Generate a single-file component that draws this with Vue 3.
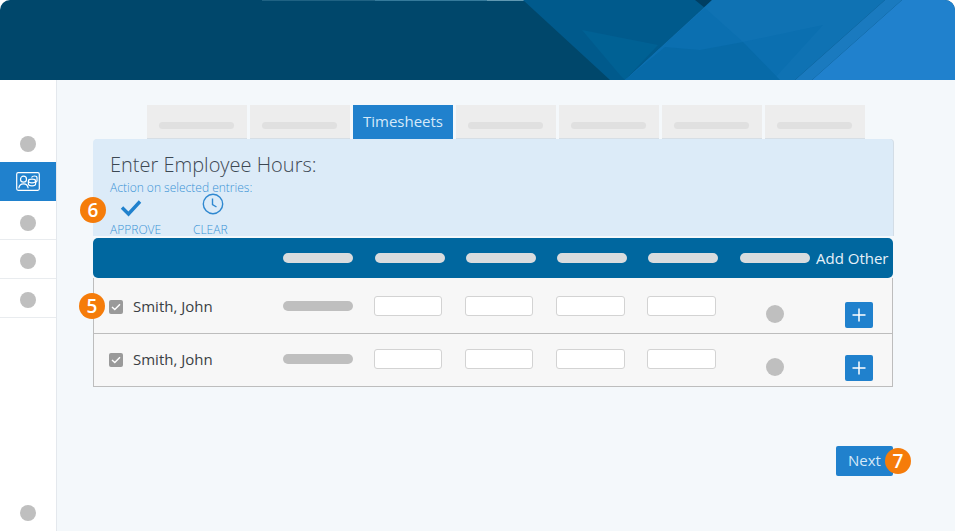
<script setup>
const tabs = [
  { id: 1 }, { id: 2 }, { id: 3, label: 'Timesheets' }, { id: 4 }, { id: 5 }, { id: 6 }, { id: 7 }
]
const headerBars = [92, 91, 91, 91, 92, 76]
const employees = [
  { id: 1, badge: '5' },
  { id: 2, badge: '' }
]
</script>

<template>
  <div class="page">
    <header class="banner">
      <svg class="banner-art" width="955" height="80" viewBox="0 0 955 80" aria-hidden="true">
        <rect x="262" y="0" width="113" height="1" fill="#1f6283" />
        <rect x="375" y="0" width="112" height="1" fill="#357a9b" />
        <rect x="487" y="0" width="70" height="1" fill="#6099b2" />
        <rect x="557" y="0" width="73" height="1" fill="#3a7f9f" />
        <polygon points="523,0 712,0 625,80 610,80" fill="#005a8c" />
        <polygon points="582,30 658,45 625,80 620,75" fill="#006194" />
        <polygon points="695,0 712,0 705,8" fill="#003f63" />
        <polygon points="712,0 885,0 795,80 625,80" fill="#0f72b3" />
        <polygon points="705,8 743,42 823,25 773,80 625,80" fill="#0b6fb0" />
        <polygon points="665,47 700,50 743,42 780,80 625,80" fill="#076aa8" />
        <polygon points="885,0 902,0 812,80 795,80" fill="#1a7abf" />
        <polygon points="902,0 955,0 955,80 812,80" fill="#2081cd" />
      </svg>
    </header>

    <div class="body">
      <aside class="sidebar">
        <div class="side-item plain"><span class="side-dot"></span></div>
        <div class="side-item active">
          <svg width="24" height="19" viewBox="0 0 24 19" fill="none" stroke="#fff" stroke-width="1.2">
            <rect x="0.7" y="0.7" width="22.6" height="17.6" rx="1.5" />
            <circle cx="7.5" cy="7.2" r="3" />
            <path d="M2.8 16.2c.3-3 2.2-4.4 4.7-4.4s4.400 1.400 4.700 4.400" />
            <ellipse cx="16" cy="9" rx="3.600" ry="1.800" />
            <path d="M12.400 9v3c0 1 1.600 1.800 3.600 1.800s3.600-.8 3.600-1.800V9" />
            <path d="M15.500 5.500c.5-1 1.800-1.500 3-1.500s2.500.6 2.500 1.700v3c0 .8-.6 1.300-1.400 1.600" />
          </svg>
        </div>
        <div class="side-item first-after"><span class="side-dot"></span></div>
        <div class="side-item"><span class="side-dot"></span></div>
        <div class="side-item"><span class="side-dot"></span></div>
        <div class="side-foot"><span class="side-dot"></span></div>
      </aside>

      <main class="main">
        <nav class="tabs">
          <div v-for="t in tabs" :key="t.id" class="tab" :class="{ current: t.label }">
            <template v-if="t.label">{{ t.label }}</template>
            <span v-else class="tab-bar"></span>
          </div>
        </nav>

        <section class="panel">
          <h1 class="panel-title">Enter Employee Hours:</h1>
          <p class="panel-sub">Action on selected entries:</p>
          <div class="actions">
            <span class="badge badge-six">6</span>
            <div class="action approve">
              <svg width="22" height="18" viewBox="0 0 22 18" fill="none" stroke="#2081cd" stroke-width="3.400">
                <path d="M2 8.500 8.500 15 20 2.500" />
              </svg>
              <span>APPROVE</span>
            </div>
            <div class="action clear">
              <svg width="22" height="22" viewBox="0 0 22 22" fill="none" stroke="#2f88d0" stroke-width="1.400">
                <circle cx="11" cy="11" r="9.700" />
                <path d="M10.500 5.500V11.500L14.500 14" />
              </svg>
              <span>CLEAR</span>
            </div>
          </div>
        </section>

        <section class="table">
          <div class="table-head">
            <span v-for="(w, i) in headerBars" :key="i" class="head-cell" :style="{ width: w + 'px' }">
              <span class="head-bar"></span>
            </span>
            <span class="head-label">Add Other</span>
          </div>
          <div v-for="e in employees" :key="e.id" class="row">
            <div class="name-cell">
              <span v-if="e.badge" class="badge badge-five">{{ e.badge }}</span>
              <span class="check">
                <svg width="10" height="8" viewBox="0 0 10 8" fill="none" stroke="#fff" stroke-width="1.400">
                  <path d="M1 4 3.800 6.600 9 1.200" />
                </svg>
              </span>
              <span class="name">Smith, John</span>
            </div>
            <span class="row-bar"></span>
            <span class="field"></span>
            <span class="field"></span>
            <span class="field wide"></span>
            <span class="field wide"></span>
            <span class="row-dot"></span>
            <button class="add" type="button">
              <svg width="16" height="16" viewBox="0 0 16 16" stroke="#fff" stroke-width="1.500">
                <path d="M8 1.500v13M1.500 8h13" />
              </svg>
            </button>
          </div>
        </section>

        <div class="footer">
          <button class="next" type="button">
            <span class="next-label">Next</span>
            <span class="badge badge-seven">7</span>
          </button>
        </div>
      </main>
    </div>
  </div>
</template>

<style>
html, body { margin: 0; background: #fff; }
</style>

<style scoped>
.page {
  width: 955px;
  height: 531px;
  display: flex;
  flex-direction: column;
  overflow: hidden;
  font-family: "Open Sans", "Liberation Sans", sans-serif;
  background: #fff;
}
.banner {
  height: 80px;
  flex: none;
  background: #00476b;
  border-radius: 10px 10px 0 0;
  overflow: hidden;
}
.banner-art { display: block; }
.body { flex: 1; display: flex; min-height: 0; }
.sidebar {
  width: 56px;
  flex: none;
  display: flex;
  flex-direction: column;
  padding-top: 43px;
  background: #fff;
  border-right: 1px solid #e4e8ed;
}
.side-item {
  height: 39px;
  box-sizing: border-box;
  padding-top: 4px;
  display: flex;
  align-items: center;
  justify-content: center;
  border-bottom: 1px solid #e9ecef;
}
.side-item.plain { border-bottom: 0; padding-top: 2px; }
.side-item.first-after { padding-top: 5px; }
.side-item.active { background: #2081cd; border-bottom: 0; padding-top: 0; }
.side-dot {
  width: 16px;
  height: 16px;
  border-radius: 50%;
  background: #bfbfbf;
}
.side-foot {
  margin-top: auto;
  padding-bottom: 10px;
  display: flex;
  justify-content: center;
}
.main {
  flex: 1;
  background: #f4f8fb;
  padding: 25px 0 0 36px;
  min-width: 0;
}
.tabs {
  display: flex;
  gap: 3px;
  margin-left: 54px;
  height: 34px;
}
.tab {
  width: 100px;
  height: 34px;
  background: #ededed;
  border-bottom: 1px solid #d6dee5;
  box-sizing: border-box;
  padding-left: 12px;
  display: flex;
  align-items: center;
}
.tab.current {
  background: #2081cd;
  color: #d5e9f9;
  font-size: 15px;
  border-bottom: 0;
  padding: 0 0 3px;
  justify-content: center;
}
.tab-bar {
  width: 75px;
  height: 7px;
  margin-top: 8px;
  border-radius: 4px;
  background: #e0e0e0;
}
.panel {
  width: 800px;
  height: 97px;
  box-sizing: border-box;
  background: #dcebf8;
  border-radius: 4px 4px 0 0;
  padding: 12px 0 0 17px;
  box-shadow: 1px 0 0 #d3dde6;
}
.panel-title {
  margin: 0;
  font-size: 20px;
  line-height: 27px;
  font-weight: 300;
  color: #3c4853;
}
.panel-sub {
  margin: 2px 0 0;
  font-size: 12px;
  line-height: 15px;
  font-weight: 300;
  color: #3a93d6;
}
.actions { position: relative; display: flex; }
.action {
  display: flex;
  flex-direction: column;
  align-items: flex-start;
  font-size: 12px;
  line-height: 15px;
  font-weight: 300;
  color: #3a93d6;
}
.approve { width: 51px; padding-top: 4px; }
.approve svg { margin-left: 10px; }
.approve span { margin-top: 5px; }
.clear { width: 34px; margin-left: 32px; margin-top: -2px; }
.clear svg { margin-left: 9px; }
.clear span { margin-top: 7px; }
.badge {
  position: absolute;
  width: 26px;
  height: 26px;
  border-radius: 50%;
  background: #f57c0a;
  color: #fff;
  font-size: 19px;
  line-height: 26px;
  font-weight: 600;
  text-align: center;
}
.badge-six { left: -30px; top: 2px; }
.badge-five { left: -15px; top: 50%; margin-top: -14px; }
.badge-seven { right: -18px; top: 2px; }
.table { width: 800px; margin-top: 2px; }
.table-head {
  height: 40px;
  box-sizing: border-box;
  padding-left: 190px;
  display: flex;
  align-items: center;
  background: #00679f;
  border-radius: 5px;
}
.head-cell { display: block; flex: none; }
.head-bar {
  display: block;
  width: 70px;
  height: 10px;
  border-radius: 5px;
  background: #d9dcde;
}
.head-label {
  color: #e6f1f9;
  font-size: 15px;
  white-space: nowrap;
}
.row {
  height: 53px;
  box-sizing: border-box;
  display: grid;
  grid-template-columns: 189px 91px 91px 91px 91px 91px 107px 1fr;
  align-items: center;
  background: #f7f7f7;
  border: 1px solid #bdbdbd;
  border-top: 0;
}
.row:nth-child(2) { height: 56px; padding-top: 3px; }
.name-cell {
  position: relative;
  display: flex;
  align-items: center;
  padding-left: 15px;
  height: 100%;
}
.check {
  width: 14px;
  height: 14px;
  border-radius: 2px;
  background: #9a9a9a;
  display: flex;
  align-items: center;
  justify-content: center;
}
.name {
  margin: -2px 0 0 10px;
  font-size: 15px;
  color: #3a3f44;
}
.row-bar {
  width: 70px;
  height: 10px;
  margin-top: -2px;
  border-radius: 5px;
  background: #bfbfbf;
}
.field {
  width: 68px;
  height: 20px;
  margin-top: -2px;
  background: #fff;
  border: 1px solid #d3d3d3;
  border-radius: 3px;
  box-sizing: border-box;
}
.field.wide { width: 69px; }
.row-dot {
  width: 18px;
  height: 18px;
  margin: 13px 0 0 28px;
  border-radius: 50%;
  background: #bfbfbf;
}
.add {
  width: 28px;
  height: 26px;
  padding: 0;
  margin-top: 15px;
  border: 0;
  border-radius: 2px;
  background: #2081cd;
  display: flex;
  align-items: center;
  justify-content: center;
}
.footer {
  width: 800px;
  display: flex;
  justify-content: flex-end;
  margin-top: 59px;
}
.next {
  position: relative;
  width: 57px;
  height: 30px;
  padding: 0;
  border: 0;
  border-radius: 2px;
  background: #2081cd;
  color: #d5e9f9;
  font-family: inherit;
  font-size: 15px;
}
.next-label { display: block; margin-top: -2px; }
</style>
